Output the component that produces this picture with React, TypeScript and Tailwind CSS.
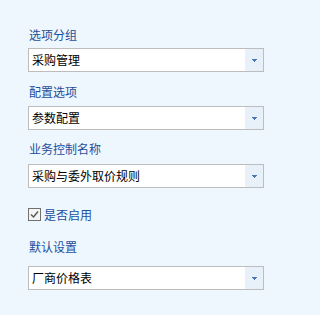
import { useState } from "react";

const font = { fontFamily: '"Noto Sans CJK SC", "Noto Sans", sans-serif' };

const Arrow = () => (
  <svg width="5" height="3" viewBox="0 0 5 3" className="block">
    <rect x="0" y="0" width="5" height="1" fill="#4a77b6" />
    <rect x="1" y="1" width="3" height="1" fill="#4a77b6" />
    <rect x="2" y="2" width="1" height="1" fill="#4a77b6" />
  </svg>
);

const SelectBox = ({ value }: { value: string }) => (
  <div className="flex h-[24px] w-[236px] border border-[#bdbdbd] bg-white">
    <div className="flex-1 pl-[3px] text-[12px] leading-[22px] text-black">{value}</div>
    <div className="flex w-[18px] items-center justify-center bg-[#e8f0fa]">
      <Arrow />
    </div>
  </div>
);

const Label = ({ text }: { text: string }) => (
  <div className="pl-[1px] text-[12px] leading-[16px] text-[#1c4f9c]">{text}</div>
);

export default function App() {
  const [enabled, setEnabled] = useState(true);

  return (
    <div className="min-h-screen w-full bg-[#eef6fe] pl-[28px] pt-[27px]" style={font}>
      <Label text="选项分组" />
      <div className="mt-[5px]">
        <SelectBox value="采购管理" />
      </div>

      <div className="mt-[12px]">
        <Label text="配置选项" />
      </div>
      <div className="mt-[6px]">
        <SelectBox value="参数配置" />
      </div>

      <div className="mt-[11px]">
        <Label text="业务控制名称" />
      </div>
      <div className="mt-[7px]">
        <SelectBox value="采购与委外取价规则" />
      </div>

      <label className="mt-[20px] flex h-[13px] cursor-pointer items-center gap-[3px]" onClick={() => setEnabled(!enabled)}>
        <span className="flex h-[13px] w-[13px] items-center justify-center border border-[#707070] bg-[#f4f4f4]">
          {enabled && (
            <svg width="9" height="9" viewBox="0 0 9 9">
              <path d="M1 4.5 L3.5 7 L8 1.5" fill="none" stroke="#555" strokeWidth="1.4" />
            </svg>
          )}
        </span>
        <span className="text-[12px] leading-[16px] text-[#1c4f9c]">是否启用</span>
      </label>

      <div className="mt-[18px]">
        <Label text="默认设置" />
      </div>
      <div className="mt-[11px]">
        <SelectBox value="厂商价格表" />
      </div>
    </div>
  );
}
